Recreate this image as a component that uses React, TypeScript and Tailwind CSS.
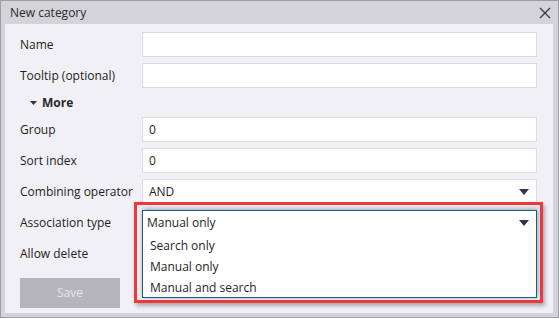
import React from 'react';

const fieldCls = 'h-[25px] w-[395px] bg-white border border-[#dcdce2] px-[6px] flex items-center text-[12px] text-[#1e1e1e]';

const Caret = ({ className = '' }: { className?: string }) => (
  <svg width="10" height="6" viewBox="0 0 10 6" className={className}>
    <path d="M0 0 H10 L5 6 Z" fill="#33334a" />
  </svg>
);

const Row = ({ label, children }: { label: string; children?: React.ReactNode }) => (
  <div className="flex items-center h-[25px]">
    <div className="w-[122px] text-[12px] text-[#1e1e1e]">{label}</div>
    {children}
  </div>
);

export default function App() {
  const options = ['Search only', 'Manual only', 'Manual and search'];

  return (
    <div
      className="w-[559px] h-[318px] bg-[#d3d3d8] border border-[#9d9da5] flex flex-col overflow-hidden"
      style={{ fontFamily: '"Open Sans", "Noto Sans", sans-serif' }}
    >
      {/* title bar */}
      <div className="h-[23px] flex items-center justify-between pl-[9px] pr-[7px] shrink-0">
        <span className="text-[12px] text-[#2c2c2c]">New category</span>
        <svg width="12" height="12" viewBox="0 0 12 12">
          <path d="M1 1 L11 11 M11 1 L1 11" stroke="#3a3a4a" strokeWidth="1.3" />
        </svg>
      </div>

      {/* body */}
      <div className="flex-1 ml-[4px] mr-[5px] mb-[4px] bg-[#f1f0f5] pl-[15px] pt-[8px] flex flex-col">
        <div className="flex flex-col gap-[6px]">
          <Row label="Name">
            <div className={fieldCls}></div>
          </Row>
          <Row label="Tooltip (optional)">
            <div className={fieldCls}></div>
          </Row>
          <div className="h-[17px] flex items-center pl-[10px] gap-[5px]">
            <svg width="7" height="4" viewBox="0 0 7 4">
              <path d="M0 0 H7 L3.5 4 Z" fill="#33334a" />
            </svg>
            <span className="text-[12px] font-bold text-[#2a2a2a]">More</span>
          </div>
          <Row label="Group">
            <div className={fieldCls}>0</div>
          </Row>
          <Row label="Sort index">
            <div className={fieldCls}>0</div>
          </Row>
          <Row label="Combining operator">
            <div className={`${fieldCls} justify-between pr-[7px]`}>
              <span>AND</span>
              <Caret />
            </div>
          </Row>
          <Row label="Association type">
            <div className="relative h-[25px] w-[395px]">
              {/* annotation */}
              <div className="absolute -left-[8px] -top-[8px] -right-[6px] h-[101px] border-[3px] border-[#f0393f] shadow-[2px_3px_4px_rgba(0,0,0,0.3)]"></div>
              {/* open dropdown */}
              <div className="absolute left-0 top-0 w-[395px] h-[88px] bg-white border border-[#1a5a8e] shadow-[1px_-1px_5px_rgba(0,0,0,0.35)] z-10 text-[12px] text-[#1e1e1e]">
                <div className="h-[24px] flex items-center justify-between pl-[4px] pr-[7px]">
                  <span>Manual only</span>
                  <Caret />
                </div>
                {options.map(o => (
                  <div key={o} className="h-[21px] flex items-center pl-[7px]">
                    {o}
                  </div>
                ))}
              </div>
            </div>
          </Row>
          <Row label="Allow delete" />
        </div>
        <div className="mt-[12px] w-[100px] h-[30px] bg-[#b5b5bb] flex items-center justify-center text-[12px] text-[#e6e6ea]">
          Save
        </div>
      </div>
    </div>
  );
}
